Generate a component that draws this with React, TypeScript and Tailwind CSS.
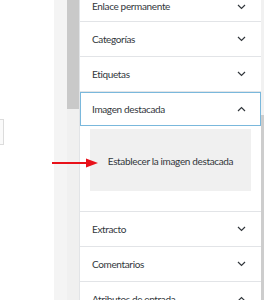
const rowsAfter = ["Extracto", "Comentarios"];

function Chevron({ up = false }: { up?: boolean }) {
  return (
    <svg width="9" height="6" viewBox="0 0 9 6" className="shrink-0">
      <path
        d={up ? "M1 5L4.5 1.5L8 5" : "M1 1L4.5 4.5L8 1"}
        fill="none"
        stroke="#32373c"
        strokeWidth="1.2"
      />
    </svg>
  );
}

function Row({ label, up = false, active = false, first = false }: { label: string; up?: boolean; active?: boolean; first?: boolean }) {
  let cls = "flex h-[35px] shrink-0 items-center justify-between border-b border-[#e2e4e7] pl-[12px] pr-[15px]";
  if (active) cls = "flex h-[34px] shrink-0 items-center justify-between border border-[#7ab8dc] pl-[11px] pr-[14px]";
  if (first) cls = "flex h-[35px] shrink-0 items-center justify-between border-b border-[#e2e4e7] pl-[12px] pr-[15px] pt-[5px]";
  return (
    <div className={cls}>
      <span>{label}</span>
      <Chevron up={up} />
    </div>
  );
}

export default function App() {
  return (
    <div className="relative flex h-[300px] w-[264px] overflow-hidden bg-white font-['Lato',sans-serif] text-[10px] tracking-[-0.35px] text-[#32373c]">
      <div className="w-[54px] shrink-0">
        <div className="-ml-[10px] mt-[119px] h-[26px] w-[14px] border border-[#dcdcdc] bg-[#fafafa]"></div>
      </div>
      <div className="w-[13px] shrink-0 bg-[#f4f4f4]"></div>
      <div className="flex w-[12px] shrink-0 flex-col bg-[#f0f0f0]">
        <div className="h-[109px] bg-[#c9c9c9]"></div>
      </div>
      <div className="flex w-[182px] shrink-0 flex-col border-l border-[#e2e4e7] -mt-[13px]">
        <Row label="Enlace permanente" first />
        <Row label="Categorías" />
        <Row label="Etiquetas" />
        <Row label="Imagen destacada" up active />
        <div className="shrink-0 border-b border-[#e2e4e7] px-[10px] pb-[20px] pt-[3px]">
          <div className="flex h-[62px] items-center justify-center bg-[#f0f0f0] pt-[3px]">
            Establecer la imagen destacada
          </div>
        </div>
        {rowsAfter.map((r) => (
          <Row key={r} label={r} />
        ))}
        <Row label="Atributos de entrada" up />
      </div>
      <div className="flex w-[3px] shrink-0 flex-col bg-[#f1f1f1]">
        <div className="mt-[115px] flex-1 bg-[#cdcdcd]"></div>
      </div>
      <svg className="absolute left-[52px] top-[158px]" width="47" height="10" viewBox="0 0 47 10">
        <rect x="0" y="4" width="36" height="2" fill="#e8111a" />
        <path d="M34 0.5L46 5L34 9.5Z" fill="#e8111a" />
      </svg>
    </div>
  );
}
